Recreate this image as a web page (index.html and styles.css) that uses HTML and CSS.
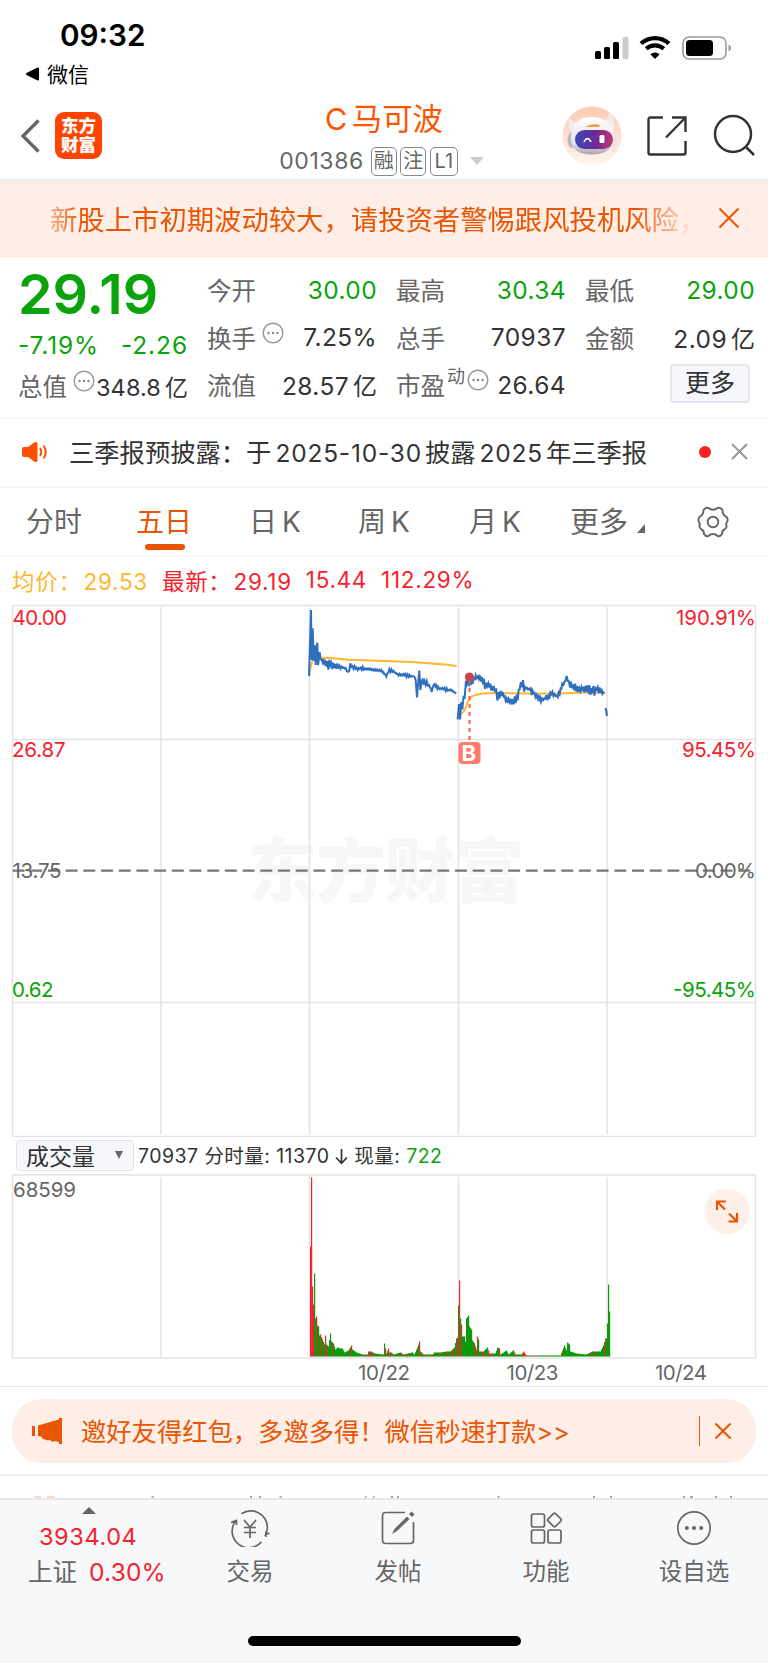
FILE: index.html
```html
<!DOCTYPE html>
<html lang="zh-CN">
<head>
    <meta charset="UTF-8">
    <meta name="viewport" content="width=device-width, initial-scale=1.0">
    <title>C马可波 001386</title>
    <link rel="stylesheet" href="styles.css">
</head>
<body>
    <div class="status-bar">
        <div class="status-left">
            <div class="clock">09:32</div>
            <div class="back-app">
                <svg width="15" height="14" viewBox="0 0 15 14"><path d="M2 7 13 1.500V12.500Z" fill="#000" stroke="#000" stroke-width="2" stroke-linejoin="round"/></svg>
                <span>微信</span>
            </div>
        </div>
        <svg class="status-icons" width="140" height="26" viewBox="0 0 140 26">
            <rect x="1" y="16" width="6" height="8" rx="1.500"/>
            <rect x="10" y="12" width="6" height="12" rx="1.500"/>
            <rect x="19" y="7" width="6" height="17" rx="1.500"/>
            <rect x="28.500" y="2" width="6" height="22" rx="1.500" fill="#ccc"/>
            <g fill="none" stroke="#000" stroke-width="4.200">
                <path d="M47 8.500C55 1.200 67 1.200 75 8.500"/>
                <path d="M52.200 13.800C57.300 9.300 64.700 9.300 69.800 13.800"/>
            </g>
            <path d="M61 24 56.300 19.300Q61 15.500 65.700 19.300Z"/>
            <rect x="89" y="2" width="43" height="22" rx="6" fill="#fff" stroke="#999" stroke-width="1.600"/>
            <rect x="92" y="5" width="27" height="16" rx="3.500"/>
            <path d="M134.500 9.500Q137 10.500 137 13T134.500 16.500Z" fill="#999"/>
        </svg>
    </div>

    <header class="header">
        <div class="header-left">
            <svg width="21" height="36" viewBox="0 0 21 36"><path d="M18.500 2.500 3 18 18.500 33.500" fill="none" stroke="#666" stroke-width="3.400"/></svg>
            <div class="logo"><span>东方</span><span>财富</span></div>
        </div>
        <div class="header-title">
            <h1>C 马可波</h1>
            <div class="code-row">
                <span class="code">001386</span>
                <span class="badge">融</span>
                <span class="badge">注</span>
                <span class="badge l1">L1</span>
                <i class="caret"></i>
            </div>
        </div>
        <div class="header-right">
            <svg width="60" height="60" viewBox="0 0 60 60">
                <defs>
                    <linearGradient id="halo" x1="0" y1="0" x2="0" y2="1"><stop offset="0" stop-color="#ffc9b0"/><stop offset="1" stop-color="#fff5f0"/></linearGradient>
                    <linearGradient id="visor" x1="0" y1="0" x2="1" y2="0"><stop offset="0" stop-color="#3a48b8"/><stop offset=".55" stop-color="#6a2a96"/><stop offset="1" stop-color="#c8356c"/></linearGradient>
                    <linearGradient id="shell" x1="0" y1="0" x2="0" y2="1"><stop offset="0" stop-color="#fff"/><stop offset=".7" stop-color="#e4e2e6"/><stop offset="1" stop-color="#aaa5ad"/></linearGradient>
                </defs>
                <circle cx="30" cy="30" r="29.500" fill="url(#halo)"/>
                <path d="M8 25Q5 18 8 12Q11 17 17 17ZM52 25Q54 12 48 6Q46 12 42 16Z" fill="#f1edee"/>
                <ellipse cx="10" cy="34" rx="4.500" ry="8" fill="#bdb9c2"/>
                <ellipse cx="51" cy="34" rx="4" ry="7" fill="#e8e3e8"/>
                <path d="M9 31C9 18 17 11 29 11C44 11 52 19 52 31C52 43 43 48.500 30 48.500C17 48.500 9 44 9 31Z" fill="url(#shell)"/>
                <path d="M23 21Q30 17 38 19L37 21Z" fill="#f29a4b"/>
                <rect x="13" y="24" width="38" height="19" rx="9.500" fill="url(#visor)"/>
                <path d="M22 36Q25.500 29 29 36" fill="none" stroke="#fff" stroke-width="1.600"/>
                <rect x="37.500" y="29" width="5" height="8" rx="1.500" fill="#fff"/>
            </svg>
            <svg width="42" height="42" viewBox="0 0 42 42" fill="none" stroke="#333" stroke-width="2.400">
                <path d="M17 2.500H4.500Q2.500 2.500 2.500 4.500V37.500Q2.500 39.500 4.500 39.500H37.500Q39.500 39.500 39.500 37.500V26"/>
                <path d="M26 2.500H39.500V17M39 3 20 22.500"/>
            </svg>
            <svg width="44" height="44" viewBox="0 0 44 44" fill="none" stroke="#333" stroke-width="2.500">
                <circle cx="21" cy="20" r="18"/>
                <path d="M33.500 32.500 42 41"/>
            </svg>
        </div>
    </header>

    <div class="warning">
        <div class="warning-text">新股上市初期波动较大，请投资者警惕跟风投机风险，</div>
        <svg width="22" height="22" viewBox="0 0 22 22"><path d="M1.500 1.500 20.500 20.500M20.500 1.500 1.500 20.500" stroke="#ea5504" stroke-width="2"/></svg>
    </div>

    <section class="quote">
        <div class="quote-col">
            <div class="price">29.19</div>
            <div class="change"><span>-7.19%</span><span>-2.26</span></div>
            <div class="cell tight"><label>总值<svg class="tip" viewBox="0 0 22 22"><use href="#tip"/></svg></label><b>348.8<em>亿</em></b></div>
        </div>
        <div class="quote-col">
            <div class="cell"><label>今开</label><b class="down">30.00</b></div>
            <div class="cell"><label>换手<svg class="tip" viewBox="0 0 22 22"><use href="#tip"/></svg></label><b>7.25%</b></div>
            <div class="cell"><label>流值</label><b>28.57<em>亿</em></b></div>
        </div>
        <div class="quote-col">
            <div class="cell"><label>最高</label><b class="down">30.34</b></div>
            <div class="cell"><label>总手</label><b>70937</b></div>
            <div class="cell"><label>市盈<sup>动</sup><svg class="tip near" viewBox="0 0 22 22"><use href="#tip"/></svg></label><b>26.64</b></div>
        </div>
        <div class="quote-col">
            <div class="cell"><label>最低</label><b class="down">29.00</b></div>
            <div class="cell"><label>金额</label><b>2.09<em>亿</em></b></div>
            <div class="cell"><button class="more">更多</button></div>
        </div>
    </section>
    <svg class="defs" width="0" height="0">
        <symbol id="tip" viewBox="0 0 22 22">
            <circle cx="11" cy="11" r="9.800" fill="none" stroke="#999" stroke-width="1.500"/>
            <circle cx="6.500" cy="11" r="1.200" fill="#888"/><circle cx="11" cy="11" r="1.200" fill="#888"/><circle cx="15.500" cy="11" r="1.200" fill="#888"/>
        </symbol>
    </svg>

    <div class="notice">
        <svg width="27" height="22" viewBox="0 0 27 22">
            <path d="M2 6H6L12 1.500Q15.500 0 15.500 3V19Q15.500 22 12 20.500L6 16H2Q0 16 0 14V8Q0 6 2 6Z" fill="#ff5000"/>
            <path d="M18 7Q20.500 11 18 15M21.500 4.500Q26 11 21.500 17.500" fill="none" stroke="#ff5000" stroke-width="2"/>
        </svg>
        <span class="notice-text">三季报预披露：于<i>2025-10-30</i>披露<i>2025</i>年三季报</span>
        <i class="dot"></i>
        <svg width="17" height="17" viewBox="0 0 17 17"><path d="M1 1 16 16M16 1 1 16" stroke="#999" stroke-width="2"/></svg>
    </div>

    <nav class="tabs">
        <span>分时</span>
        <span class="active">五日</span>
        <span>日<i>K</i></span>
        <span>周<i>K</i></span>
        <span>月<i>K</i></span>
        <span class="tab-more">更多<i class="corner"></i></span>
        <svg width="32" height="32" viewBox="0 0 32 32" fill="none" stroke="#666" stroke-width="1.900">
            <circle cx="16" cy="16" r="5.300"/>
            <path d="M11 1.800Q13.500 3.800 16 3.800T21 1.800Q24 1.500 25.500 4Q25.500 9 29.500 10.800Q31.300 13 30.300 15.500Q28.500 18 29.500 19.500Q30 22 27.500 23.500Q25 24.500 25 28Q23.500 30.500 21 30.200Q18.500 28 16 28T11 30.200Q8.500 30.500 7 28Q7 24.500 4.500 23.500Q2 22 2.500 19.500Q3.500 18 1.700 15.500Q.7 13 2.500 10.800Q6.500 9 6.500 4Q8 1.500 11 1.800Z"/>
        </svg>
    </nav>

    <div class="legend">
        <span class="avg">均价：<i>29.53</i></span>
        <span class="last">最新：<i>29.19</i></span>
        <span class="last">15.44</span>
        <span class="last">112.29%</span>
    </div>

    <svg class="chart" width="768" height="533" viewBox="0 0 768 533">
        <text class="watermark" x="247" y="293" textLength="277">东方财富</text>
        <g class="grid">
            <rect x="12.500" y="1.500" width="743" height="531"/>
            <path d="M12 135.500H756M12 398.500H756M161 3V530M309.500 3V530M458.500 3V530M607 3V530"/>
        </g>
        <path class="zero" d="M12.500 266.700H755"/>
        <g transform="translate(295 -4) scale(.33333)">
            <path class="avg-line" d="M43 228Q48 176 62 174T105 174L160 179L350 186L420 191L460 194L485 199"/>
            <path class="avg-line" d="M496 341Q508 338 514 318T530 290Q550 278 600 279L780 281L840 278L930 278M934 328L937 340"/>
            <path id="day1" class="price-line"/>
            <path id="day2" class="price-line"/>
            <path class="price-line" d="M932 324L936 348"/>
        </g>
        <path d="M469.500 76V136" class="mark-line"/>
        <circle cx="469.500" cy="73" r="4.600" class="mark-dot"/>
        <rect x="458.500" y="138" width="22" height="22" rx="4" fill="#ff7b6b"/>
        <text x="461.500" y="157" class="mark">B</text>
        <g class="axis">
            <text class="up" x="12.500" y="20.500" textLength="54.500">40.00</text>
            <text class="up" x="12" y="153" textLength="53.500">26.87</text>
            <text x="12.500" y="273.500" textLength="49">13.75</text>
            <text class="down" x="12" y="392.500" textLength="41.500">0.62</text>
            <text class="up" x="676" y="20.500" textLength="80">190.91%</text>
            <text class="up" x="682" y="153" textLength="74">95.45%</text>
            <text x="695" y="273.500" textLength="61">0.00%</text>
            <text class="down" x="673" y="392.500" textLength="83">-95.45%</text>
        </g>
    </svg>

    <div class="volume-bar">
        <span class="select">成交量<i class="arrow"></i></span>
        <span class="volume-info">70937 分时量: 11370 <svg width="13" height="17" viewBox="0 0 13 17"><path d="M6.500 1V15M1 9.500 6.500 15.300 12 9.500" fill="none" stroke="#333" stroke-width="1.700"/></svg> 现量: <span class="down">722</span></span>
    </div>

    <svg class="chart" width="768" height="212" viewBox="0 0 768 212">
        <g class="grid">
            <rect x="12.500" y="1" width="743" height="183"/>
            <path d="M161 3V183M309.500 3V183M458.500 3V183M607 3V183"/>
        </g>
        <g id="volume"></g>
        <g class="axis">
            <text x="13" y="22.500" textLength="63">68599</text>
            <text x="358" y="206" textLength="52">10/22</text>
            <text x="506.500" y="206" textLength="52">10/23</text>
            <text x="655" y="206" textLength="52">10/24</text>
        </g>
        <circle cx="727" cy="37.500" r="22.600" fill="#fef0e8"/>
        <path d="M717 36V27.500H726M717.500 28 725 35.500M728.500 47.500H737V39M736.500 47 729 39.500" fill="none" stroke="#ea5504" stroke-width="2.200"/>
    </svg>

    <div class="promo-wrap">
        <div class="promo">
            <svg width="32" height="28" viewBox="0 0 32 28" fill="#ea5504">
                <path d="M1 9H4V19H1ZM7 8.500 28 2.500V1H31V27H28V25L24 24Q21.500 26 19 22.800L17 23.500L11 21.500V20L7 19Z"/>
            </svg>
            <span class="promo-text">邀好友得红包，多邀多得！微信秒速打款&gt;&gt;</span>
            <i class="divider"></i>
            <svg width="18" height="18" viewBox="0 0 18 18"><path d="M1.500 1.500 16.500 16.500M16.500 1.500 1.500 16.500" stroke="#ea5504" stroke-width="2"/></svg>
        </div>
    </div>

    <div class="peek">
        <svg width="768" height="2" viewBox="0 0 768 2">
            <path d="M34 1H41M47 1H55" stroke="#f9cdb5" stroke-width="1.500"/>
            <path d="M151.500 1h2M250 1h2M259 1h2M279.500 1h2M365 1h1.500M373 1h1.500M391 1h2M397 1h2M497.500 1h2M593 1h2M610 1h2M683 1h2M690 1h3M715 1h2M730 1h2" stroke="#888" stroke-width="1.500"/>
        </svg>
    </div>

    <footer class="nav">
        <div class="nav-item index">
            <i class="up-caret"></i>
            <span class="index-value">3934.04</span>
            <span class="index-name">上证<i>0.30%</i></span>
        </div>
        <div class="nav-item">
            <svg width="42" height="38" viewBox="0 0 42 38" fill="none" stroke="#666" stroke-width="1.700">
                <path d="M12.500 4.700A16.600 16.600 0 0 1 36.800 25.500L40.500 24M36.800 28V22.500M32.500 32.800A16.600 16.600 0 0 1 7 11.500L2 13.500M7.500 16V10.500"/>
                <path d="M15 11 21 18 27 11M21 18V29M15 18.500H27M15 23.500H27"/>
            </svg>
            <span>交易</span>
        </div>
        <div class="nav-item">
            <svg width="38" height="38" viewBox="0 0 38 38" fill="none" stroke="#666" stroke-width="1.700">
                <path d="M26 3.500H7Q3.500 3.500 3.500 7V31Q3.500 34.500 7 34.500H31.500Q34.500 34.500 34.500 31V13"/>
                <path d="M13 25 15.500 20 28 7.500 30.500 10 18 22Z" fill="#666" stroke="none"/>
                <path d="M31.500 6.500 34 4" stroke-width="4"/>
            </svg>
            <span>发帖</span>
        </div>
        <div class="nav-item">
            <svg width="38" height="38" viewBox="0 0 38 38" fill="none" stroke="#666" stroke-width="1.700">
                <rect x="4.500" y="5" width="13" height="13" rx="2"/>
                <rect x="4.500" y="21" width="13" height="13" rx="2"/>
                <rect x="21" y="21" width="13" height="13" rx="2"/>
                <rect x="22.300" y="5.800" width="10.400" height="10.400" rx="1.500" transform="rotate(45 27.500 11)"/>
            </svg>
            <span>功能</span>
        </div>
        <div class="nav-item">
            <svg width="38" height="38" viewBox="0 0 38 38">
                <circle cx="19" cy="19" r="16.200" fill="none" stroke="#666" stroke-width="1.700"/>
                <circle cx="11.800" cy="19" r="2" fill="#666"/><circle cx="19" cy="19" r="2" fill="#666"/><circle cx="26.200" cy="19" r="2" fill="#666"/>
            </svg>
            <span>设自选</span>
        </div>
        <div class="home-indicator"></div>
    </footer>

    <script src="script.js"></script>
</body>
</html>
```
FILE: styles.css
```css
* {
    box-sizing: border-box;
}
body {
    margin: 0;
    width: 768px;
    height: 1663px;
    overflow: hidden;
    background: #fff;
    color: #333;
    font-family: Inter, "Noto Sans CJK SC", sans-serif;
}
i, em {
    font-style: normal;
}
svg {
    display: block;
    flex: none;
}
.defs {
    display: none;
}
.down { color: #0ba30b; fill: #0ba30b; }
.up { color: #f5222d; fill: #f5222d; }

/* status bar */
.status-bar {
    display: flex;
    justify-content: space-between;
    height: 96px;
    padding: 0 34px 0 25px;
    color: #000;
}
.clock {
    margin: 17px 0 0 35px;
    font-size: 29.7px;
    line-height: 36px;
    font-weight: 600;
}
.back-app {
    display: flex;
    align-items: center;
    gap: 7px;
    height: 38px;
    padding-top: 1px;
    font-size: 21px;
}
.back-app svg {
    margin-top: 2px;
}
.status-icons {
    margin: 35px 0 0 0;
}

/* header */
.header {
    display: grid;
    grid-template-columns: 230px 1fr 230px;
    height: 85px;
    border-bottom: 2px solid #ebedf0;
}
.header-left {
    display: flex;
    align-items: center;
    padding: 0 0 5px 20px;
    gap: 14px;
    height: 84px;
}
.logo {
    display: flex;
    flex-direction: column;
    justify-content: center;
    align-items: center;
    width: 47px;
    height: 47px;
    border-radius: 9px;
    background: #ff4400;
    color: #fff;
    font-size: 17.5px;
    line-height: 19.5px;
    font-weight: 900;
    padding-bottom: 1px;
}
.header-title h1 {
    margin: 4px 0 0;
    text-align: center;
    font-size: 30.4px;
    line-height: 38px;
    font-weight: 400;
    word-spacing: -4px;
    color: #ff5500;
}
.code-row {
    display: flex;
    align-items: center;
    justify-content: center;
    height: 32px;
    margin: 7px 0 0 -5px;
    color: #666;
}
.code {
    margin-right: 7px;
    font-size: 23px;
    letter-spacing: .6px;
}
.badge {
    width: 26px;
    height: 29px;
    margin-right: 3.5px;
    border: 1.5px solid #888;
    border-radius: 5px;
    text-align: center;
    font-size: 20px;
    line-height: 26px;
}
.badge.l1 {
    width: 28px;
    margin-right: 12px;
}
.caret {
    border: 7px solid transparent;
    border-top: 8px solid #ccc;
    border-bottom: 0;
}
.header-right {
    display: flex;
    align-items: center;
    height: 80px;
    gap: 24px;
    padding-left: 24px;
}

.warning {
    display: flex;
    align-items: center;
    justify-content: space-between;
    height: 77px;
    padding: 0 28px 3px 50px;
    background: #feeee6;
    color: #ea5504;
}
.warning-text {
    width: 658px;
    white-space: nowrap;
    font-size: 27.35px;
    -webkit-mask-image: linear-gradient(90deg, rgba(0,0,0,.4), #000 32px, #000 585px, transparent 645px);
    mask-image: linear-gradient(90deg, rgba(0,0,0,.4), #000 32px, #000 585px, transparent 645px);
}

/* quote panel */
.quote {
    display: grid;
    grid-template-columns: repeat(4, 170px);
    column-gap: 19px;
    height: 161px;
    padding: 8px 0 0 18px;
    border-bottom: 2px solid #f5f6f8;
}
.price {
    height: 54px;
    color: #0ba30b;
    font-size: 55.5px;
    line-height: 55px;
    font-weight: 600;
}
.change {
    display: flex;
    justify-content: space-between;
    align-items: center;
    height: 42px;
    padding-top: 8px;
    color: #0ba30b;
    font-size: 24.5px;
    letter-spacing: .9px;
}
.cell {
    display: flex;
    justify-content: space-between;
    align-items: center;
    height: 47.5px;
    white-space: nowrap;
    font-size: 24.5px;
}
.cell label {
    display: flex;
    align-items: center;
    color: #666;
}
.cell b {
    font-weight: 400;
    letter-spacing: .4px;
}
.cell em {
    margin-left: 4px;
    font-size: 24px;
    letter-spacing: 0;
}
.cell.tight b {
    font-size: 23.5px;
    letter-spacing: .1px;
}
.cell.tight em {
    margin-left: 4px;
    font-size: 23px;
}
.cell sup {
    margin-left: 2px;
    font-size: 18px;
    line-height: 18px;
    padding-bottom: 16px;
}
.tip {
    width: 22px;
    height: 22px;
    margin: 0 0 9px 6px;
}
.tip.near {
    margin-left: 2px;
}
.more {
    width: 80px;
    height: 39px;
    margin: -2px 5px 0 auto;
    padding: 0;
    border: 2px solid #e3e6ec;
    border-radius: 4px;
    background: #f6f7fa;
    color: #333;
    font-family: inherit;
    font-size: 25px;
    line-height: 32px;
    padding-bottom: 2px;
}

.notice {
    display: flex;
    align-items: center;
    height: 69px;
    padding: 0 20px 2px 22px;
    border-bottom: 2px solid #f5f6f8;
}
.notice-text {
    width: 600px;
    margin-left: 20px;
    padding-bottom: 2px;
    font-size: 25.3px;
    white-space: nowrap;
}
.notice-text i {
    margin: 0 3px 0 4px;
    font-size: 24.5px;
    letter-spacing: .8px;
}
.dot {
    width: 12px;
    height: 12px;
    margin: 0 20px 0 31px;
    border-radius: 50%;
    background: #f52222;
}

.tabs {
    display: grid;
    grid-template-columns: 110px 113px 109px 111px 101px 127px 32px;
    align-items: center;
    height: 69px;
    padding-left: 26px;
    border-bottom: 2px solid #f5f6f8;
    color: #666;
    font-size: 28px;
}
.tabs > span {
    position: relative;
    padding-bottom: 4px;
    white-space: nowrap;
}
.tabs i {
    margin-left: 5px;
}
.tabs .active {
    color: #ea5504;
}
.active::after {
    content: "";
    position: absolute;
    left: 9px;
    bottom: -6px;
    width: 40px;
    height: 6px;
    border-radius: 3px;
    background: #ea5504;
}
.tabs .tab-more {
    font-size: 29px;
}
.tabs .corner {
    display: inline-block;
    margin-left: 9px;
    border-left: 8px solid transparent;
    border-bottom: 9px solid #666;
}

.legend {
    display: flex;
    align-items: center;
    height: 47px;
    padding: 0 0 2px 12px;
    gap: 14px;
    font-size: 22.5px;
    white-space: nowrap;
}
.legend i {
    margin-left: 2px;
}
.legend span {
    letter-spacing: .7px;
}
.avg { color: #ffb62e; }
.last { color: #f5222d; }

/* charts */
.grid {
    fill: none;
    stroke: #e0e4ea;
    stroke-width: 1.5;
}
.axis {
    fill: #666;
    font-size: 20.5px;
}
.axis .up { fill: #f5222d; }
.axis .down { fill: #0ba30b; }
.watermark {
    font-size: 70px;
    font-weight: 900;
    fill: #f7f7f7;
}
.zero {
    stroke: #777;
    stroke-width: 2.2;
    stroke-dasharray: 12 5.7;
}
.price-line {
    fill: none;
    stroke: #2f6fc0;
    stroke-width: 6;
}
.avg-line {
    fill: none;
    stroke: #ffb62e;
    stroke-width: 6;
}
.mark-line {
    stroke: #ff5b4d;
    stroke-width: 2;
    stroke-dasharray: 4 4;
}
.mark-dot {
    fill: #c9484f;
}
.mark {
    fill: #fff;
    font-size: 22px;
    font-weight: 700;
}

.volume-bar {
    display: flex;
    align-items: center;
    height: 37px;
    padding-left: 16px;
    white-space: nowrap;
}
.select {
    display: flex;
    align-items: center;
    justify-content: space-between;
    width: 118px;
    height: 31px;
    padding: 0 10px 2px 9px;
    border: 1.5px solid #dfe2e8;
    border-radius: 4px;
    background: #f6f7fa;
    font-size: 23px;
}
.arrow {
    border: 4.5px solid transparent;
    border-top: 8px solid #666;
    border-bottom: 0;
}
.volume-info {
    margin-left: 4px;
    padding-bottom: 2px;
    font-size: 19.5px;
    letter-spacing: .45px;
}
.volume-info svg {
    display: inline-block;
    vertical-align: -2px;
}

.promo-wrap {
    height: 90px;
    padding: 12px 12px 0;
    border-top: 1px solid #e6e6e6;
    border-bottom: 2px solid #ededed;
}
.promo {
    display: flex;
    align-items: center;
    height: 64px;
    padding: 0 24px 0 19px;
    border-radius: 30px;
    background: #feeee6;
    color: #ea5504;
}
.promo-text {
    flex: 1;
    margin-left: 18px;
    padding-bottom: 2px;
    font-size: 25.3px;
    white-space: nowrap;
}
.divider {
    width: 1.5px;
    height: 30px;
    margin-right: 14px;
    background: #ea5504;
}

.peek {
    height: 22px;
    padding-top: 20px;
}

/* bottom nav */
.nav {
    display: grid;
    grid-template-columns: 176px repeat(4, 148px);
    grid-template-rows: 136px 27px;
    height: 165px;
    border-top: 2px solid #e6e8eb;
    background: #f7f8fa;
    color: #666;
}
.nav-item {
    display: flex;
    flex-direction: column;
    align-items: center;
    padding-top: 9px;
    font-size: 23.5px;
}
.nav-item > svg {
    height: 38px;
}
.nav-item > span {
    line-height: 34px;
    margin-top: 8px;
}
.nav-item.index {
    padding-left: 18px;
    align-items: flex-start;
}
.nav .up-caret {
    margin: -2px 0 0 64px;
    border: 7px solid transparent;
    border-bottom: 7px solid #666;
    border-top: 0;
}
.nav .index-value {
    margin: 6px 0 0 21px;
    color: #f5222d;
    letter-spacing: .6px;
}
.nav .index-name {
    margin: 1px 0 0 10px;
    font-size: 24.5px;
}
.index-name i {
    margin-left: 12px;
    color: #f5222d;
    letter-spacing: .2px;
}
.home-indicator {
    grid-column: 1 / -1;
    justify-self: center;
    width: 273px;
    height: 10px;
    border-radius: 5px;
    background: #000;
}
```
FILE: script.js
```js
// small seeded generator so the intraday jitter is stable between loads
let seed = 7;
function rand() {
    seed = (seed * 16807) % 2147483647;
    return seed / 2147483647;
}

// [x, price level, jitter]
const day1 = [
    [42, 228, 0], [48, 30, 0], [50, 180, 0], [53, 85, 0], [56, 182, 0], [59, 135, 0], [62, 195, 0], [64, 150, 0],
    [67, 128, 0], [69, 195, 0], [74, 160, 6], [80, 182, 9], [100, 192, 18], [112, 196, 12], [130, 199, 8], [152, 205, 3],
    [159, 217, 3], [166, 199, 10], [185, 204, 7], [240, 209, 3], [262, 213, 4], [274, 228, 3], [283, 210, 6], [305, 221, 4],
    [325, 225, 5], [358, 230, 2], [362, 240, 0], [366, 292, 0], [370, 240, 0], [373, 212, 0], [376, 270, 0], [380, 235, 14],
    [392, 250, 12], [405, 262, 7], [410, 276, 0], [416, 255, 5], [430, 265, 6], [455, 269, 6], [470, 272, 3], [484, 280, 0]
];
const day2 = [
    [488, 350, 10], [492, 340, 28], [502, 318, 24], [509, 275, 24], [513, 250, 9], [530, 247, 14], [545, 230, 10], [563, 238, 9],
    [570, 262, 22], [580, 255, 10], [600, 270, 12], [607, 290, 22], [620, 283, 14], [635, 298, 13], [650, 307, 14], [668, 293, 12],
    [674, 268, 12], [681, 250, 20], [690, 262, 18], [710, 272, 14], [727, 290, 9], [738, 300, 7], [760, 290, 10], [772, 278, 13],
    [785, 290, 8], [797, 275, 10], [802, 255, 11], [815, 236, 20], [825, 252, 12], [850, 269, 12], [878, 266, 14], [895, 274, 16],
    [908, 266, 14], [928, 280, 4]
];

function linePath(keys) {
    let d = "";
    let side = 1;
    for (let k = 0; k < keys.length - 1; k++) {
        const [x0, y0, a0] = keys[k];
        const [x1, y1, a1] = keys[k + 1];
        const steps = a0 || a1 ? Math.max(1, Math.round((x1 - x0) / 3)) : 1;
        for (let s = 0; s < steps; s++) {
            const t = s / steps;
            const jitter = (a0 + (a1 - a0) * t) * rand() * side;
            side = -side;
            d += (d ? "L" : "M") + (x0 + (x1 - x0) * t).toFixed(1) + " " + (y0 + (y1 - y0) * t + jitter).toFixed(1);
        }
    }
    const end = keys[keys.length - 1];
    return d + "L" + end[0] + " " + end[1];
}
document.getElementById("day1").setAttribute("d", linePath(day1));
document.getElementById("day2").setAttribute("d", linePath(day2));

// [x, height, rising]
const volume = [
    [310, 110, 1], [311, 179, 1], [312, 70, 1], [313, 52, 1], [314, 83, 0], [315, 38, 0], [316, 40, 1], [317, 31, 0],
    [318, 30, 0], [319, 21, 0], [320, 22, 1], [322, 17, 0], [324, 12, 0], [325, 21, 1], [326, 12, 0], [328, 10, 0],
    [330, 23, 0], [331, 15, 0], [333, 13, 1], [335, 7, 0], [337, 9, 0], [340, 8, 0], [342, 8, 0], [344, 4, 0],
    [348, 6, 0], [351, 11, 1], [352, 7, 0], [356, 4, 0], [362, 2, 0], [367, 2, 0], [368, 5, 0], [371, 5, 1],
    [374, 3, 0], [383, 2, 0], [384, 13, 0], [386, 3, 0], [388, 8, 1], [389, 4, 0], [391, 4, 1], [393, 2, 0], [400, 4, 1],
    [403, 2, 0], [412, 4, 0], [414, 2, 0], [417, 9, 0], [419, 15, 1], [420, 5, 1], [423, 2, 0], [432, 2, 0],
    [434, 4, 1], [440, 4, 1], [446, 5, 0], [450, 5, 0], [454, 9, 0], [456, 18, 0], [457, 19, 1], [458, 51, 0],
    [459, 76, 1], [460, 38, 0], [461, 32, 1], [462, 20, 0], [464, 20, 0], [465, 15, 0], [466, 38, 0], [468, 41, 0],
    [469, 30, 0], [471, 27, 0], [472, 16, 0], [474, 13, 0], [476, 7, 0], [477, 20, 1], [478, 17, 0], [479, 5, 0],
    [483, 5, 1], [487, 9, 0], [489, 3, 0], [495, 3, 0], [497, 9, 0], [499, 8, 1], [500, 2, 0], [506, 6, 0],
    [508, 2, 0], [513, 6, 0], [515, 2, 0], [521, 2, 0], [523, 5, 1], [526, 1, 0], [540, 1, 0], [560, 1, 0],
    [562, 6, 1], [564, 11, 0], [566, 6, 0], [567, 14, 0], [569, 12, 0], [570, 5, 0], [576, 3, 0], [586, 2, 0],
    [592, 5, 0], [600, 5, 0], [603, 11, 0], [605, 18, 1], [606, 18, 0], [607, 33, 0], [608, 72, 0], [609, 45, 0]
];
const base = 182.5;
let bars = "";
for (let k = 0; k < volume.length; k++) {
    const [x, h, rising] = volume[k];
    const next = volume[k + 1] || [x + 1, h];
    for (let px = x; px < next[0]; px++) {
        const mid = h + (next[1] - h) * (px - x) / (next[0] - x);
        const red = px === x ? rising : rand() < 0.15;
        bars += `<rect x="${px}" y="${(base - mid).toFixed(1)}" width="1.2" height="${mid.toFixed(1)}" fill="${red ? "#f5222d" : "#0a9a0a"}"/>`;
    }
}
document.getElementById("volume").innerHTML = bars;
```
